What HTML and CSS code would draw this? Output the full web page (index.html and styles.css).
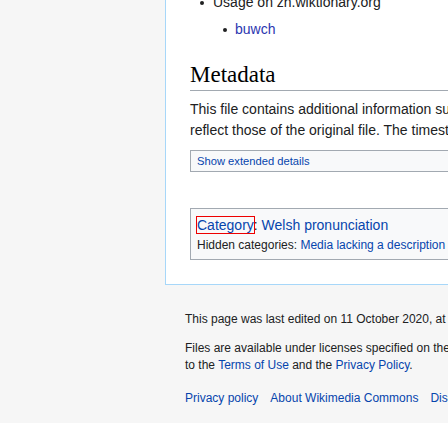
FILE: index.html
```html
<!DOCTYPE html>
<html lang="en">
<head>
<meta charset="utf-8">
<title>File page – Wikimedia Commons</title>
<link rel="stylesheet" href="styles.css">
</head>
<body>
<div class="page">
  <div class="layout">
    <div class="sidebar"></div>
    <main class="content">
      <ul class="usage">
        <li>Usage on zh.wiktionary.org
          <ul class="usage-sub">
            <li><a class="visited" href="#">buwch</a></li>
          </ul>
        </li>
      </ul>
      <h2 class="section-title">Metadata</h2>
      <p class="meta-note">This file contains additional information such as Exif metadata which may have been added by the digital camera, scanner, or software program used to create or digitize it. If the file has been modified from its original state, some details such as the timestamp may not fully<br>reflect those of the original file. The timestamp is only as accurate as the clock in the camera, and it may be completely wrong.</p>
      <div class="details-toggle"><a href="#">Show extended details</a></div>
      <div class="catlinks">
        <div class="catlinks-normal"><a class="focused" href="#">Category</a>: <a href="#">Welsh pronunciation</a></div>
        <div class="catlinks-hidden">Hidden categories: <a href="#">Media lacking a description</a></div>
      </div>
    </main>
  </div>
  <footer class="footer">
    <p class="footer-line">This page was last edited on 11 October 2020, at 13:20.</p>
    <p class="footer-line footer-license">Files are available under licenses specified on their description page. All structured data from the file namespace is available under the Creative Commons CC0 License; all unstructured text is available under the Creative Commons Attribution-ShareAlike License; additional terms may apply. By using this site, you agree<br>to the <a href="#">Terms of Use</a> and the <a href="#">Privacy Policy</a>.</p>
    <ul class="footer-places">
      <li><a href="#">Privacy policy</a></li>
      <li><a href="#">About Wikimedia Commons</a></li>
      <li><a href="#">Disclaimers</a></li>
      <li><a href="#">Mobile view</a></li>
    </ul>
  </footer>
</div>
</body>
</html>
```
FILE: styles.css
```css
html, body {
  margin: 0;
  padding: 0;
  overflow: hidden;
  background: #ffffff;
}

body {
  font-family: "Liberation Sans", Arial, sans-serif;
  color: #202122;
}

a {
  color: #0645ad;
  text-decoration: none;
}

a.visited {
  color: #2b35b0;
}

.page {
  background: #f6f6f6;
  margin-top: -9px;
  padding-bottom: 16px;
}

.layout {
  display: flex;
}

.sidebar {
  flex: none;
  width: 165px;
}

.content {
  flex: none;
  width: 1200px;
  background: #ffffff;
  border-left: 1px solid #a7d7f9;
  border-bottom: 1px solid #a7d7f9;
  padding: 0 0 24px 24px;
  font-size: 14px;
}

.usage {
  list-style: none;
  margin: 0;
  padding: 0 0 0 10px;
  line-height: 22px;
}

.usage li::before {
  content: "";
  display: inline-block;
  width: 4px;
  height: 4px;
  border-radius: 50%;
  background: #202122;
  margin-right: 9px;
  vertical-align: middle;
}

.usage-sub {
  list-style: none;
  margin: 5px 0 0;
  padding: 0 0 0 23px;
}

.usage-sub li::before {
  margin-right: 8px;
}

.section-title {
  margin: 20px 0 0;
  font-family: "Liberation Serif", "Times New Roman", serif;
  font-weight: normal;
  font-size: 23px;
  line-height: 30px;
  color: #000000;
  border-bottom: 1px solid #a2a9b1;
}

.meta-note {
  margin: 8px 0 0;
  line-height: 21px;
  white-space: nowrap;
}

.details-toggle {
  margin-top: 9px;
  border: 1px solid #a2a9b1;
  background: #f8f9fa;
  font-size: 11.2px;
  line-height: 20px;
  padding: 0 6px;
}

.catlinks {
  margin-top: 36px;
  border: 1px solid #a2a9b1;
  background: #f8f9fa;
  padding: 5px 6px;
}

.catlinks-normal {
  line-height: 22.4px;
}

.catlinks-hidden {
  font-size: 12px;
  line-height: 18px;
}

a.focused {
  outline: 1px solid #ee0000;
}

.footer {
  margin-left: 165px;
  padding: 26px 0 0 20px;
  font-size: 12px;
  line-height: 17px;
  white-space: nowrap;
}

.footer-line {
  margin: 0;
}

.footer-license {
  margin-top: 12px;
}

.footer-places {
  list-style: none;
  display: flex;
  gap: 12px;
  margin: 16px 0 0;
  padding: 0;
}
```
